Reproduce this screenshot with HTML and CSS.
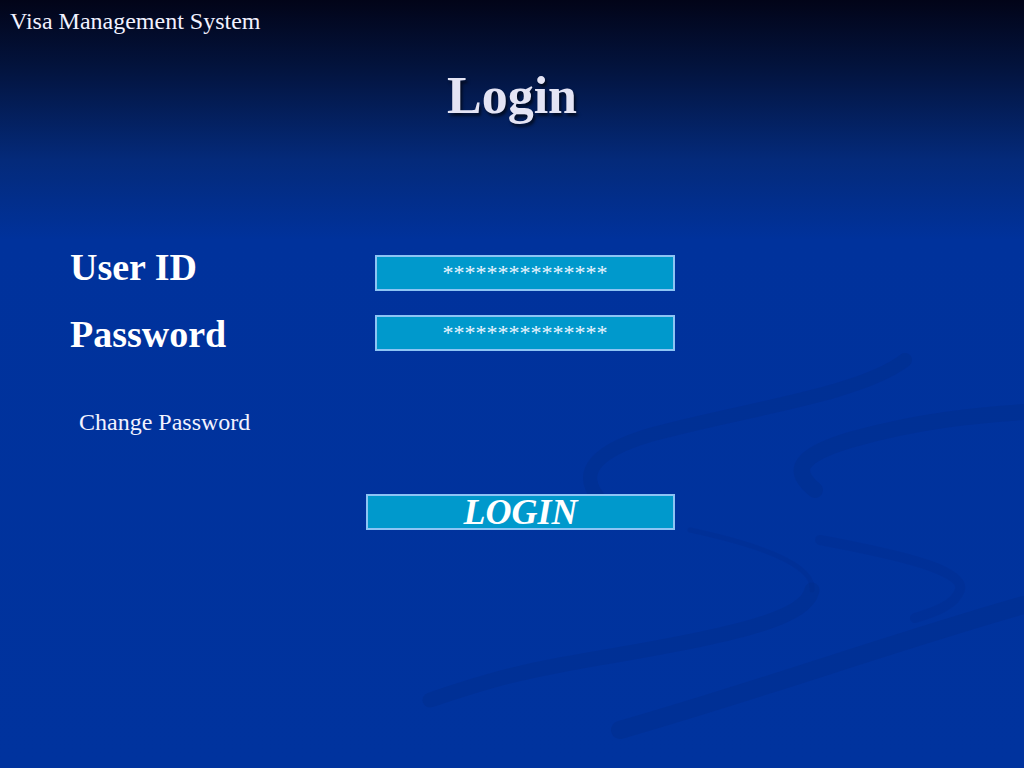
FILE: index.html
```html
<!DOCTYPE html>
<html lang="en">
<head>
    <meta charset="UTF-8">
    <meta name="viewport" content="width=device-width, initial-scale=1.0">
    <link rel="stylesheet" href="styles.css">
    <title>Visa Management System - Login</title>
</head>
<body>
<svg class="swirls" viewBox="0 0 1024 768" preserveAspectRatio="none" aria-hidden="true">
    <path class="swirl" d="M600 500 C575 470 600 450 650 435 C740 410 860 395 905 360" stroke-width="14"/>
    <path class="swirl thin" d="M690 530 C760 545 815 565 812 590" stroke-width="5"/>
    <path class="swirl" d="M812 590 C805 625 700 640 560 665 C500 676 460 690 430 700" stroke-width="15"/>
    <path class="swirl" d="M815 490 C790 470 800 455 850 440 C920 420 980 415 1024 412" stroke-width="16"/>
    <path class="swirl thin" d="M820 540 C900 555 965 570 960 590 C955 605 935 612 915 618" stroke-width="10"/>
    <path class="swirl" d="M1024 605 C900 640 760 690 620 730" stroke-width="18"/>
</svg>
<div class="page">
    <div class="app-name">Visa Management System</div>
    <h1 class="title">Login</h1>
    <div class="login-form">
        <div class="labels">
            <div class="label">User ID</div>
            <div class="label">Password</div>
        </div>
        <div class="fields">
            <div class="field">***************</div>
            <div class="field">***************</div>
        </div>
    </div>
    <div class="change-password">Change Password</div>
    <button class="login-button">LOGIN</button>
</div>
</body>
</html>
```

FILE: styles.css
```css
body {
    margin: 0;
    height: 768px;
    overflow: hidden;
    font-family: "Liberation Serif", "Times New Roman", serif;
    color: #f2f2ff;
    background: linear-gradient(to bottom, #020418 0px, #03143f 70px, #042a7a 160px, #00329c 240px, #00339e 768px);
}

.swirls {
    position: absolute;
    top: 0;
    left: 0;
    width: 1024px;
    height: 768px;
}

.swirl {
    fill: none;
    stroke: #002c8a;
    stroke-linecap: round;
    opacity: 0.4;
}

.swirl.thin {
    opacity: 0.3;
}

.page {
    position: relative;
}

.app-name {
    padding: 7px 0 0 10px;
    font-size: 24px;
    line-height: 28px;
}

.title {
    margin: 31px 0 0 0;
    text-align: center;
    font-size: 52px;
    line-height: 60px;
    font-weight: bold;
    color: #e4e4f4;
    text-shadow: 2px 3px 3px rgba(0, 0, 0, 0.6);
}

.login-form {
    display: flex;
    margin-top: 108px;
}

.labels {
    width: 305px;
    padding-left: 70px;
}

.label {
    font-size: 38px;
    line-height: 67px;
    font-weight: bold;
    color: #ffffff;
}

.fields {
    display: flex;
    flex-direction: column;
    gap: 24px;
    padding-top: 21px;
}

.field {
    box-sizing: border-box;
    width: 300px;
    height: 36px;
    background-color: #0099cc;
    border: 2px solid #8cc4f4;
    text-align: center;
    font-size: 22px;
    line-height: 31px;
    color: #e8f4ff;
}

.change-password {
    margin: 39px 0 0 79px;
    font-size: 24px;
    line-height: 30px;
}

.login-button {
    display: block;
    box-sizing: border-box;
    margin: 57px 0 0 366px;
    width: 309px;
    height: 36px;
    padding: 0;
    background-color: #0099cc;
    border: 2px solid #8cc4f4;
    font-family: "Liberation Serif", "Times New Roman", serif;
    font-size: 36px;
    line-height: 32px;
    font-weight: bold;
    font-style: italic;
    color: #ffffff;
    text-align: center;
}
```
